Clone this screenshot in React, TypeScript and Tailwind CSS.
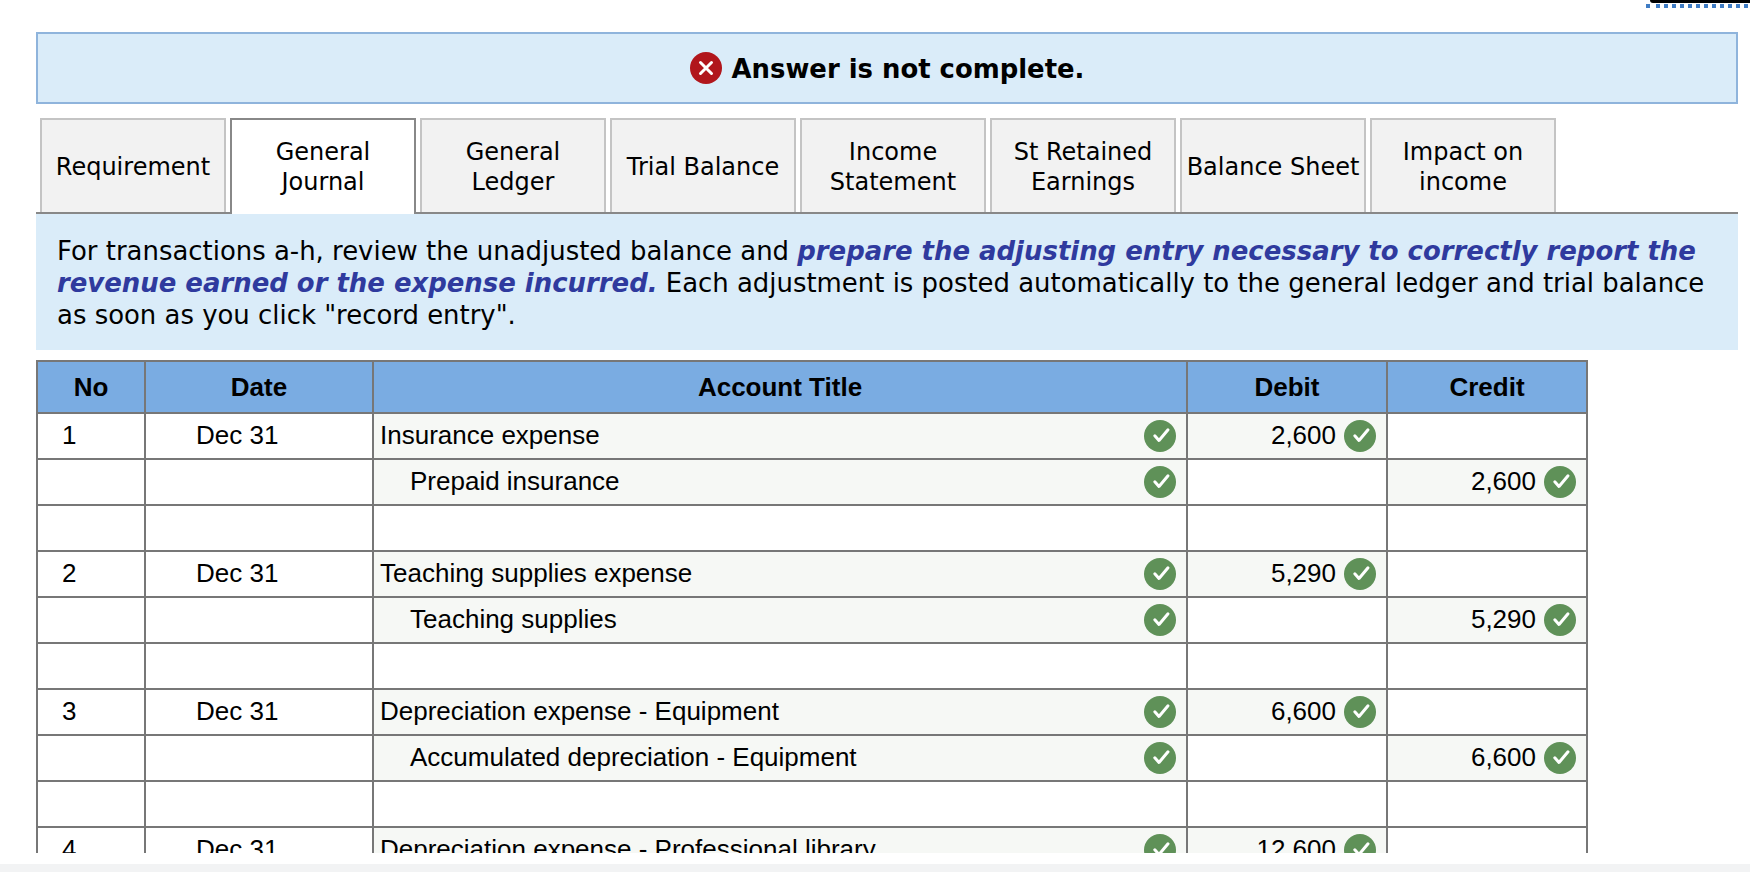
import React from "react";

type Entry = { no?: string; date?: string; title?: string; indent?: boolean; debit?: string; credit?: string };

const tabs = [
  "Requirement",
  "General Journal",
  "General Ledger",
  "Trial Balance",
  "Income Statement",
  "St Retained Earnings",
  "Balance Sheet",
  "Impact on income",
];

const entries: Entry[] = [
  { no: "1", date: "Dec 31", title: "Insurance expense", debit: "2,600" },
  { title: "Prepaid insurance", indent: true, credit: "2,600" },
  {},
  { no: "2", date: "Dec 31", title: "Teaching supplies expense", debit: "5,290" },
  { title: "Teaching supplies", indent: true, credit: "5,290" },
  {},
  { no: "3", date: "Dec 31", title: "Depreciation expense - Equipment", debit: "6,600" },
  { title: "Accumulated depreciation - Equipment", indent: true, credit: "6,600" },
  {},
  { no: "4", date: "Dec 31", title: "Depreciation expense - Professional library", debit: "12,600" },
];

const Check = () => (
  <svg viewBox="0 0 32 32" className="w-8 h-8 shrink-0">
    <circle cx="16" cy="16" r="16" fill="#5f9158" />
    <path d="M10.8 15.8 L15 20.5 L24 9.8" fill="none" stroke="#fff" strokeWidth="3" strokeLinecap="round" strokeLinejoin="round" />
  </svg>
);

const Cross = () => (
  <svg viewBox="0 0 32 32" className="w-8 h-8 shrink-0">
    <circle cx="16" cy="16" r="16" fill="#b1161c" />
    <path d="M10.5 10.5 L21.5 21.5 M21.5 10.5 L10.5 21.5" stroke="#fff" strokeWidth="3" strokeLinecap="round" />
  </svg>
);

const Amount = ({ value }: { value?: string }) => {
  if (!value) return <td className="border-2 border-[#777] bg-white" />;
  return (
    <td className="border-2 border-[#777] bg-[#f6f8f5] pr-[10px]">
      <div className="flex items-center justify-end gap-2">
        <span className="pb-[2px]">{value}</span>
        <Check />
      </div>
    </td>
  );
};

export default function App() {
  return (
    <div className="h-[872px] w-[1750px] overflow-hidden bg-white flex flex-col text-black">
      {/* top right bit of the page above */}
      <div className="h-8 flex justify-end">
        <div className="w-[104px] flex flex-col items-end">
          <div className="h-[3px] w-[100px] bg-black rounded-bl-[3px]" />
          <div className="mt-px h-1 w-[104px] flex gap-[6px]">
            <div className="w-1 h-1 bg-[#3f7cc4]" />
            <div className="flex-1 h-1 bg-[repeating-linear-gradient(90deg,#3f7cc4_0_4px,transparent_4px_8px)]" />
          </div>
        </div>
      </div>

      <div className="mx-9 w-[1702px] font-['DejaVu_Sans',sans-serif]">
        <div className="h-[72px] border-2 border-[#8fb4dc] bg-[#daecf9] flex items-center justify-center gap-[10px]">
          <Cross />
          <span className="font-bold text-[25.9px] pt-[2px]">Answer is not complete.</span>
        </div>

        {/* tabs */}
        <div className="mt-[14px] h-24 flex gap-1 pl-1 border-b-2 border-[#888] text-[24px] leading-[30px]">
          {tabs.map((t, i) => (
            <div
              key={t}
              className={
                i === 1
                  ? "w-[186px] h-24 px-1 flex items-center justify-center text-center bg-white border-2 border-b-0 border-[#888]"
                  : "w-[186px] h-[94px] px-1 pt-[2px] flex items-center justify-center text-center bg-[#f2f2f2] border-2 border-b-0 border-[#c4c4c4]"
              }
            >
              {t}
            </div>
          ))}
        </div>

        <div className="h-[136px] bg-[#daecf9] px-[21px] pt-[21px] text-[25.93px] leading-8">
          For transactions a-h, review the unadjusted balance and{" "}
          <b className="italic text-[#2f3a9e]">prepare the adjusting entry necessary to correctly report the revenue earned or the expense incurred.</b>{" "}
          Each adjustment is posted automatically to the general ledger and trial balance as soon as you click "record entry".
        </div>
      </div>

      <div className="mt-[10px] mx-9 h-[493px] overflow-hidden font-['Liberation_Sans',sans-serif] text-[26px]">
        <table className="w-[1551px] table-fixed border-collapse">
          <colgroup>
            <col className="w-[108px]" />
            <col className="w-[228px]" />
            <col className="w-[814px]" />
            <col className="w-[200px]" />
            <col className="w-[200px]" />
          </colgroup>
          <thead>
            <tr className="h-[52px] bg-[#7aace2] font-bold">
              {["No", "Date", "Account Title", "Debit", "Credit"].map((h) => (
                <th key={h} className="border-2 border-[#777] text-center">{h}</th>
              ))}
            </tr>
          </thead>
          <tbody>
            {entries.map((e, i) => (
              <tr key={i} className="h-[46px]">
                <td className="border-2 border-[#777] pl-6 pb-[2px]">{e.no}</td>
                <td className="border-2 border-[#777] pl-[50px] pb-[2px]">{e.date}</td>
                <td className={e.title ? "border-2 border-[#777] bg-[#f6f8f5] pr-[10px]" : "border-2 border-[#777]"}>
                  {e.title && (
                    <div className={e.indent ? "flex items-center justify-between pl-[36px]" : "flex items-center justify-between pl-[6px]"}>
                      <span className="pb-[2px]">{e.title}</span>
                      <Check />
                    </div>
                  )}
                </td>
                <Amount value={e.debit} />
                <Amount value={e.credit} />
              </tr>
            ))}
          </tbody>
        </table>
      </div>

      <div className="mt-[11px] h-2 bg-[#f2f3f4]" />
    </div>
  );
}
